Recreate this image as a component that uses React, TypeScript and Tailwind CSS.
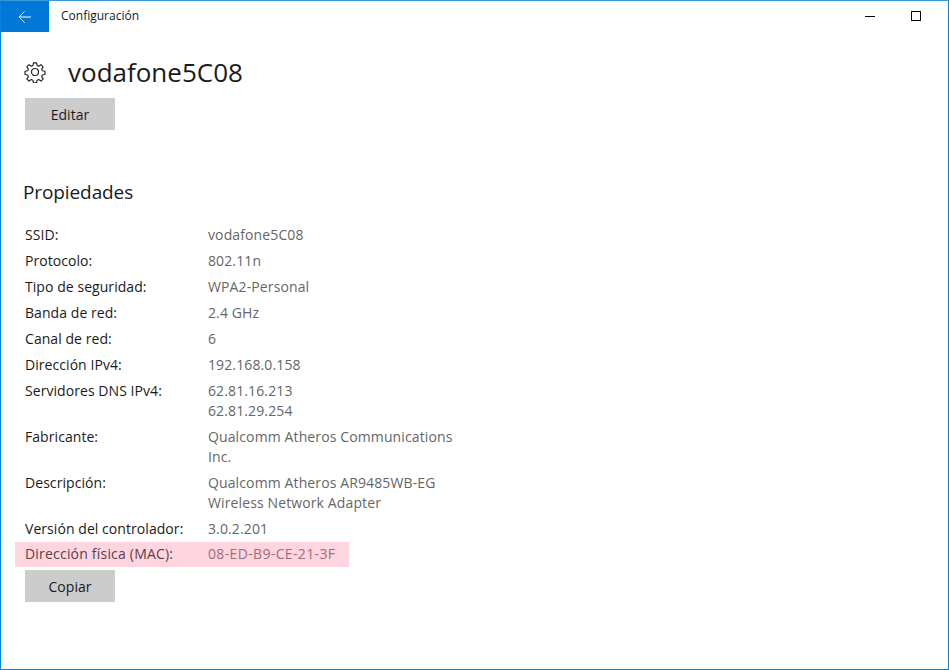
import React from "react";

const rows: [string, string[]][] = [
  ["SSID:", ["vodafone5C08"]],
  ["Protocolo:", ["802.11n"]],
  ["Tipo de seguridad:", ["WPA2-Personal"]],
  ["Banda de red:", ["2.4 GHz"]],
  ["Canal de red:", ["6"]],
  ["Dirección IPv4:", ["192.168.0.158"]],
  ["Servidores DNS IPv4:", ["62.81.16.213", "62.81.29.254"]],
  ["Fabricante:", ["Qualcomm Atheros Communications", "Inc."]],
  ["Descripción:", ["Qualcomm Atheros AR9485WB-EG", "Wireless Network Adapter"]],
  ["Versión del controlador:", ["3.0.2.201"]],
];

export default function App() {
  return (
    <div className="w-[949px] h-[670px] bg-white border border-[#0a84d8] border-t-[#3a9ad9] flex flex-col overflow-hidden font-['Open_Sans','Liberation_Sans',sans-serif] text-[14px] tracking-[0.06px] text-[#1a1a1a]">
      <div className="h-[31px] flex items-center">
        <div className="w-12 h-[31px] bg-[#0078d7] flex items-center justify-center">
          <svg width="16" height="16" viewBox="0 0 16 16" fill="none" stroke="white" strokeWidth="1"><path d="M2 8h12M7.5 2.5L2 8l5.5 5.5" /></svg>
        </div>
        <div className="ml-3 mb-[2px] text-[12px] tracking-normal">Configuración</div>
        <div className="ml-auto flex items-center gap-[36px] mr-[27px]">
          <div className="w-[10px] h-px bg-black" />
          <div className="w-[10px] h-[10px] mb-[2px] border border-black" />
        </div>
      </div>
      <div className="pl-6 flex-1 flex flex-col">
        <div className="flex items-center mt-[24px] h-[32px]">
          <svg className="-ml-px" width="22" height="22" viewBox="0 0 24 24" fill="none" stroke="#222" strokeWidth="1.3" strokeLinejoin="round"><circle cx="12" cy="12" r="3.8"/><path d="M10.2 1.5h3.6l.6 3.1 1.9.8 2.6-1.8 2.5 2.5-1.8 2.6.8 1.9 3.1.6v3.6l-3.1.6-.8 1.9 1.8 2.6-2.5 2.5-2.6-1.8-1.9.8-.6 3.1h-3.6l-.6-3.1-1.9-.8-2.6 1.8-2.5-2.5 1.8-2.6-.8-1.9-3.1-.6v-3.6l3.1-.6.8-1.9-1.8-2.6 2.5-2.5 2.6 1.8 1.9-.8z" transform="translate(0.6 0.6) scale(0.95)"/></svg>
          <div className="ml-[22px] text-[26px] leading-8 tracking-normal">vodafone5C08</div>
        </div>
        <div className="mt-[10px] w-[90px] h-8 bg-[#cccccc] flex items-center justify-center">Editar</div>
        <div className="mt-[48px] -ml-[2px] text-[19px] leading-7 tracking-[-0.1px]">Propiedades</div>
        <div className="mt-[19px] flex flex-col w-[500px]">
          {rows.map(([k, v]) => (
            <div key={k} className="flex leading-5 mb-[6px]">
              <div className="w-[183px]">{k}</div>
              <div className="w-[260px] text-[#666666] tracking-[0.12px]">{v.map((l) => <div key={l}>{l}</div>)}</div>
            </div>
          ))}
          <div className="flex leading-5 -ml-[10px] pl-[10px] w-[334px] bg-[#ffd5df] pt-[2px] pb-[3px] -mt-[3px]">
            <div className="w-[183px] text-[#5c3f49] tracking-[0.2px]">Dirección física (MAC):</div>
            <div className="text-[#9c6f7a] tracking-[0.35px]">08-ED-B9-CE-21-3F</div>
          </div>
        </div>
        <div className="mt-[3px] w-[90px] h-8 bg-[#cccccc] flex items-center justify-center">Copiar</div>
      </div>
    </div>
  );
}
